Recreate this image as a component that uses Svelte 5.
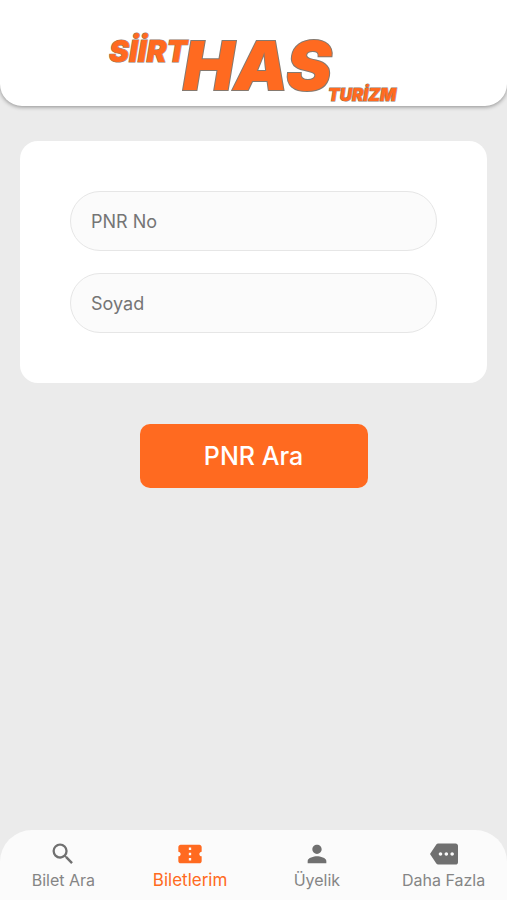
<script>
  let pnr = $state('');
  let surname = $state('');
  const tabs = [
    { label: 'Bilet Ara', icon: 'search' },
    { label: 'Biletlerim', icon: 'ticket', active: true },
    { label: 'Üyelik', icon: 'person' },
    { label: 'Daha Fazla', icon: 'more' }
  ];
  const paths = {
    search: 'M15.5 14h-.79l-.28-.27A6.47 6.47 0 0 0 16 9.5 6.5 6.5 0 1 0 9.5 16c1.61 0 3.09-.59 4.23-1.57l.27.28v.79l5 4.99L20.49 19l-4.99-5zm-6 0C7.01 14 5 11.99 5 9.5S7.01 5 9.5 5 14 7.01 14 9.5 11.99 14 9.5 14z',
    ticket: 'M22 10V6c0-1.11-.9-2-2-2H4c-1.1 0-1.99.89-1.99 2v4c1.1 0 1.99.9 1.99 2s-.89 2-2 2v4c0 1.1.9 2 2 2h16c1.1 0 2-.9 2-2v-4c-1.1 0-2-.9-2-2s.9-2 2-2zm-9 7.5h-2v-2h2v2zm0-4.5h-2v-2h2v2zm0-4.5h-2v-2h2v2z',
    person: 'M12 12c2.21 0 4-1.79 4-4s-1.79-4-4-4-4 1.79-4 4 1.79 4 4 4zm0 2c-2.67 0-8 1.34-8 4v2h16v-2c0-2.66-5.33-4-8-4z',
    more: 'M22 3H7c-.69 0-1.23.35-1.59.88L0 12l5.41 8.11c.36.53.97.89 1.66.89H22c1.1 0 2-.9 2-2V5c0-1.1-.9-2-2-2zM9 13.5c-.83 0-1.5-.67-1.5-1.5s.67-1.5 1.5-1.5 1.5.67 1.5 1.5-.67 1.5-1.5 1.5zm5 0c-.83 0-1.5-.67-1.5-1.5s.67-1.5 1.5-1.5 1.5.67 1.5 1.5-.67 1.5-1.5 1.5zm5 0c-.83 0-1.5-.67-1.5-1.5s.67-1.5 1.5-1.5 1.5.67 1.5 1.5-.67 1.5-1.5 1.5z'
  };
</script>

<div class="screen">
  <header>
    <svg class="logo" viewBox="0 0 292 76" role="img" aria-label="Siirt Has Turizm">
      <text x="1" y="34" font-size="30">SİİRT</text>
      <text class="big" x="75" y="62" font-size="68">HAS</text>
      <text x="220" y="73" font-size="17">TURİZM</text>
    </svg>
  </header>

  <main>
    <form onsubmit={(e) => e.preventDefault()}>
      <div class="card">
        <input type="text" aria-label="PNR No" placeholder="PNR No" bind:value={pnr} />
        <input type="text" aria-label="Soyad" placeholder="Soyad" bind:value={surname} />
      </div>
      <button type="submit">PNR Ara</button>
    </form>
  </main>

  <nav>
    {#each tabs as tab}
      <a href="#{tab.icon}" class:active={tab.active} aria-current={tab.active ? 'page' : undefined}>
        <svg viewBox="0 0 24 24" aria-hidden="true"><path d={paths[tab.icon]} /></svg>
        <span>{tab.label}</span>
      </a>
    {/each}
  </nav>
</div>

<style>
  :global(body) {
    margin: 0;
    background: #ebebeb;
  }
  .screen {
    min-height: 100vh;
    display: flex;
    flex-direction: column;
    background: #ebebeb;
    font-family: Inter, 'Liberation Sans', sans-serif;
  }
  header {
    box-sizing: border-box;
    height: 106px;
    padding-top: 28px;
    display: flex;
    justify-content: center;
    background: #fff;
    border-radius: 0 0 22px 22px;
    box-shadow: 0 1px 4px rgba(0, 0, 0, 0.4);
  }
  .logo {
    width: 292px;
    height: 76px;
    overflow: visible;
  }
  .logo text {
    font-weight: 900;
    font-style: italic;
    fill: #ff6a20;
    stroke: #8f7768;
    stroke-width: 1px;
    paint-order: stroke;
  }
  .logo .big {
    stroke: #85796f;
    stroke-width: 2px;
  }
  main {
    flex: 1;
    padding: 35px 20px 0;
  }
  form {
    display: flex;
    flex-direction: column;
    align-items: center;
    gap: 41px;
  }
  .card {
    box-sizing: border-box;
    width: 100%;
    padding: 50px;
    display: flex;
    flex-direction: column;
    gap: 22px;
    background: #fff;
    border-radius: 18px;
  }
  input {
    box-sizing: border-box;
    width: 100%;
    height: 60px;
    padding: 0 20px;
    border: 1px solid #e6e6e6;
    border-radius: 30px;
    background: #fbfbfb;
    color: #333;
    font: 18px/24px Inter, 'Liberation Sans', sans-serif;
  }
  input::placeholder {
    color: #757575;
    opacity: 1;
  }
  button {
    width: 228px;
    height: 64px;
    padding: 0;
    border: 0;
    border-radius: 10px;
    background: #ff6a20;
    color: #fff;
    font: 500 25px/32px Inter, 'Liberation Sans', sans-serif;
  }
  nav {
    box-sizing: border-box;
    height: 70px;
    padding-top: 10px;
    display: flex;
    background: #fbfbfb;
    border-radius: 32px 32px 0 0;
  }
  a {
    flex: 1;
    display: flex;
    flex-direction: column;
    align-items: center;
    color: #858585;
    font-size: 16px;
    line-height: 24px;
    text-decoration: none;
    white-space: nowrap;
  }
  a svg {
    width: 28px;
    height: 28px;
    fill: #707070;
  }
  a.active {
    color: #ff6a20;
    font-size: 17px;
  }
  a.active svg {
    fill: #ff6a20;
  }
</style>
